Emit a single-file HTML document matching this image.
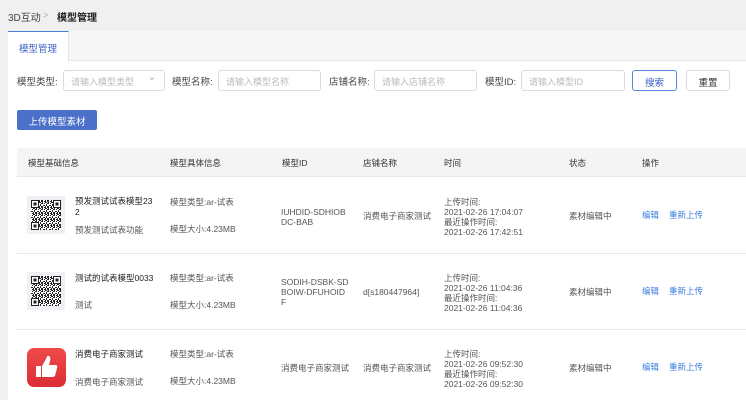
<!DOCTYPE html><html><head><meta charset="utf-8"><style>
*{margin:0;padding:0;box-sizing:border-box}
body{width:746px;height:400px;overflow:hidden;background:#f0f0f0;font-family:"Liberation Sans","Noto Sans CJK SC",sans-serif;color:#333;position:relative}
.a{position:absolute;white-space:nowrap}
.f9{font-size:8.5px;color:#555;line-height:10px}
.inp{position:absolute;height:21px;border:1px solid #dcdcdc;border-radius:3px;background:#fff;font-size:9px;color:#bbb;padding:4px 0 0 7px}
.lbl{font-size:9.5px;color:#444}
.qr{position:absolute;width:38px;height:38px;background:#eef0f3}
.blue{color:#3a7be0}
</style></head><body>
<svg width="0" height="0" style="position:absolute"><defs>
<pattern id="p" width="6" height="6" patternUnits="userSpaceOnUse">
<rect x="0" y="0" width="2" height="1" fill="#222"/><rect x="3" y="0" width="1" height="2" fill="#222"/><rect x="5" y="1" width="1" height="1" fill="#222"/><rect x="1" y="2" width="1" height="2" fill="#222"/><rect x="4" y="3" width="2" height="1" fill="#222"/><rect x="0" y="4" width="1" height="1" fill="#222"/><rect x="2" y="4" width="2" height="2" fill="#222"/><rect x="5" y="5" width="1" height="1" fill="#222"/><rect x="0" y="5" width="1" height="1" fill="#222"/><rect x="2" y="1" width="1" height="1" fill="#222"/></pattern>
<g id="q"><rect x="4" y="4" width="30" height="30" fill="#fff"/><rect x="4" y="4" width="30" height="30" fill="url(#p)"/>
<rect x="4.5" y="4.5" width="7" height="7" fill="#fff" stroke="#222"/><rect x="6.5" y="6.5" width="3" height="3" fill="#222"/>
<rect x="26.5" y="4.5" width="7" height="7" fill="#fff" stroke="#222"/><rect x="28.5" y="6.5" width="3" height="3" fill="#222"/>
<rect x="4.5" y="26.5" width="7" height="7" fill="#fff" stroke="#222"/><rect x="6.5" y="28.5" width="3" height="3" fill="#222"/></g>
</defs></svg>
<div class="a" style="left:8px;top:9px;font-size:10px;color:#444">3D互动</div>
<div class="a" style="left:43px;top:10px;font-size:9px;color:#aaa">&gt;</div>
<div class="a" style="left:57px;top:9px;font-size:10px;font-weight:bold;color:#222">模型管理</div>
<div class="a" style="left:8px;top:31px;width:738px;height:369px;background:#fff"></div>
<div class="a" style="left:8px;top:31px;width:738px;height:30px;background:#f7f7f7;border-bottom:1px solid #e6e6e6"></div>
<div class="a" style="left:8px;top:31px;width:61px;height:31px;background:#fff;border-top:1px solid #4a7fd8;border-right:1px solid #e6e6e6;font-size:9.5px;color:#3b63c4;text-align:center;padding-top:9px">模型管理</div>
<div class="a lbl" style="left:17px;top:74px">模型类型:</div>
<div class="inp" style="left:63px;top:70px;width:102px">请输入模型类型<span style="position:absolute;right:8px;top:1px;color:#aaa;font-size:10px">⌄</span></div>
<div class="a lbl" style="left:172px;top:74px">模型名称:</div>
<div class="inp" style="left:218px;top:70px;width:103px">请输入模型名称</div>
<div class="a lbl" style="left:329px;top:74px">店铺名称:</div>
<div class="inp" style="left:374px;top:70px;width:103px">请输入店铺名称</div>
<div class="a lbl" style="left:485px;top:74px">模型ID:</div>
<div class="inp" style="left:521px;top:70px;width:104px">请输入模型ID</div>
<div class="a" style="left:632px;top:70px;width:45px;height:21px;border:1px solid #5b84d8;border-radius:3px;font-size:9.5px;color:#3b63c4;text-align:center;padding-top:4px">搜索</div>
<div class="a" style="left:686px;top:70px;width:44px;height:21px;border:1px solid #dcdcdc;border-radius:3px;font-size:9.5px;color:#333;text-align:center;padding-top:4px">重置</div>
<div class="a" style="left:17px;top:110px;width:80px;height:20px;background:#4a70c9;border-radius:2px;font-size:9.5px;color:#fff;text-align:center;padding-top:4px">上传模型素材</div>
<div class="a" style="left:17px;top:148px;width:729px;height:29px;background:#f4f4f4;border-bottom:1px solid #e8e8e8"></div>
<div class="a f9" style="top:158px;left:28px;color:#333">模型基础信息</div>
<div class="a f9" style="top:158px;left:170px;color:#333">模型具体信息</div>
<div class="a f9" style="top:158px;left:282px;color:#333">模型ID</div>
<div class="a f9" style="top:158px;left:363px;color:#333">店铺名称</div>
<div class="a f9" style="top:158px;left:444px;color:#333">时间</div>
<div class="a f9" style="top:158px;left:569px;color:#333">状态</div>
<div class="a f9" style="top:158px;left:642px;color:#333">操作</div>
<div class="a" style="left:17px;top:253px;width:729px;height:1px;background:#e8e8e8"></div>
<div class="a" style="left:17px;top:329px;width:729px;height:1px;background:#e8e8e8"></div>
<!-- row1 -->
<svg class="qr" style="left:27px;top:196px" viewBox="0 0 38 38"><use href="#q"/></svg>
<div class="a f9" style="left:75px;top:196px;color:#222;line-height:11px">预发测试试表模型23<br>2</div>
<div class="a f9" style="left:75px;top:225px">预发测试试表功能</div>
<div class="a f9" style="left:170px;top:197px">模型类型:ar-试表</div>
<div class="a f9" style="left:170px;top:224px">模型大小:4.23MB</div>
<div class="a f9" style="left:281px;top:207px">IUHDID-SDHIOB<br>DC-BAB</div>
<div class="a f9" style="left:363px;top:211px">消费电子商家测试</div>
<div class="a f9" style="left:444px;top:197px">上传时间:<br>2021-02-26 17:04:07<br>最近操作时间:<br>2021-02-26 17:42:51</div>
<div class="a f9" style="left:569px;top:211px">素材编辑中</div>
<div class="a f9 blue" style="left:642px;top:210px">编辑</div>
<div class="a f9 blue" style="left:669px;top:210px">重新上传</div>
<!-- row2 -->
<svg class="qr" style="left:27px;top:272px" viewBox="0 0 38 38"><use href="#q"/></svg>
<div class="a f9" style="left:75px;top:273px;color:#222">测试的试表模型0033</div>
<div class="a f9" style="left:75px;top:300px">测试</div>
<div class="a f9" style="left:170px;top:273px">模型类型:ar-试表</div>
<div class="a f9" style="left:170px;top:300px">模型大小:4.23MB</div>
<div class="a f9" style="left:281px;top:277px">SODIH-DSBK-SD<br>BOIW-DFUHOID<br>F</div>
<div class="a f9" style="left:363px;top:287px">d[s180447964]</div>
<div class="a f9" style="left:444px;top:273px">上传时间:<br>2021-02-26 11:04:36<br>最近操作时间:<br>2021-02-26 11:04:36</div>
<div class="a f9" style="left:569px;top:287px">素材编辑中</div>
<div class="a f9 blue" style="left:642px;top:286px">编辑</div>
<div class="a f9 blue" style="left:669px;top:286px">重新上传</div>
<!-- row3 -->
<div class="a" style="left:27px;top:348px;width:39px;height:39px;border-radius:7px;background:linear-gradient(#ef4a4a,#dc2d35)">
<svg width="39" height="39" viewBox="0 0 39 39"><rect x="9" y="18" width="5" height="11" fill="#fff"/><path d="M15 18 L19 11 Q20 7 22 8 Q24 9 23 13 L22 17 L29 17 Q31 18 30 20 L28 28 Q27 29 25 29 L15 29 Z" fill="#fff"/></svg></div>
<div class="a f9" style="left:75px;top:349px;color:#222">消费电子商家测试</div>
<div class="a f9" style="left:75px;top:377px">消费电子商家测试</div>
<div class="a f9" style="left:170px;top:349px">模型类型:ar-试表</div>
<div class="a f9" style="left:170px;top:376px">模型大小:4.23MB</div>
<div class="a f9" style="left:281px;top:363px">消费电子商家测试</div>
<div class="a f9" style="left:363px;top:363px">消费电子商家测试</div>
<div class="a f9" style="left:444px;top:349px">上传时间:<br>2021-02-26 09:52:30<br>最近操作时间:<br>2021-02-26 09:52:30</div>
<div class="a f9" style="left:569px;top:363px">素材编辑中</div>
<div class="a f9 blue" style="left:642px;top:362px">编辑</div>
<div class="a f9 blue" style="left:669px;top:362px">重新上传</div>
</body></html>
